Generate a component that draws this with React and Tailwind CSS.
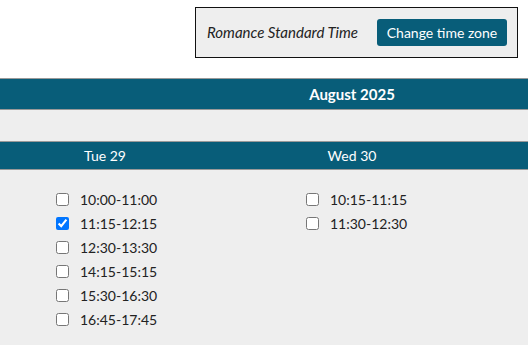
import React, { useState } from 'react';

const days = [
  { label: 'Tue 29', slots: ['10:00-11:00', '11:15-12:15', '12:30-13:30', '14:15-15:15', '15:30-16:30', '16:45-17:45'] },
  { label: 'Wed 30', slots: ['10:15-11:15', '11:30-12:30'] },
];

const App = () => {
  const [checked, setChecked] = useState({ 'Tue 29|11:15-12:15': true });

  const toggle = (key) => {
    setChecked((prev) => ({ ...prev, [key]: !prev[key] }));
  };

  return (
    <div className="w-[528px] h-[345px] overflow-hidden bg-white font-['Lato',sans-serif] text-[14px] text-[#222]">
      {/* Zona horaria */}
      <div className="h-[78px] flex justify-end items-start pt-[7px] pr-[10px]">
        <div className="w-[323px] h-[51px] bg-[#eeeeee] border border-[#111] flex items-center justify-between pl-[11px] pr-[10px]">
          <span className="italic text-[15px] text-[#222]">Romance Standard Time</span>
          <button className="h-[27px] w-[130px] rounded-[3px] bg-[#085d79] text-white text-[14px] leading-none">
            Change time zone
          </button>
        </div>
      </div>

      {/* Mes */}
      <div className="h-[31px] bg-[#085d79] border-t border-[#999] flex items-center justify-center pl-[176px]">
        <span className="font-bold text-white text-[15px]">August 2025</span>
      </div>
      <div className="h-[32px] bg-[#eeeeee] border-t border-[#999]" />

      {/* Dias */}
      <div className="h-[29px] bg-[#085d79] border-t border-b border-[#999] grid grid-cols-[250px_250px] items-center text-white text-[14px]">
        <div className="text-center pr-[40px]">Tue 29</div>
        <div className="text-center pr-[46px]">Wed 30</div>
      </div>

      {/* Horarios */}
      <div className="bg-[#eeeeee] h-full grid grid-cols-[250px_250px] pt-[17px]">
        {days.map((day) => (
          <div key={day.label} className="flex flex-col pl-[56px]">
            {day.slots.map((slot) => {
              const key = `${day.label}|${slot}`;
              return (
                <label key={slot} className="h-[24px] flex items-center gap-[11px]">
                  <input
                    type="checkbox"
                    checked={!!checked[key]}
                    onChange={() => toggle(key)}
                    className="w-[13px] h-[13px] m-0"
                  />
                  <span>{slot}</span>
                </label>
              );
            })}
          </div>
        ))}
      </div>
    </div>
  );
};

export default App;
